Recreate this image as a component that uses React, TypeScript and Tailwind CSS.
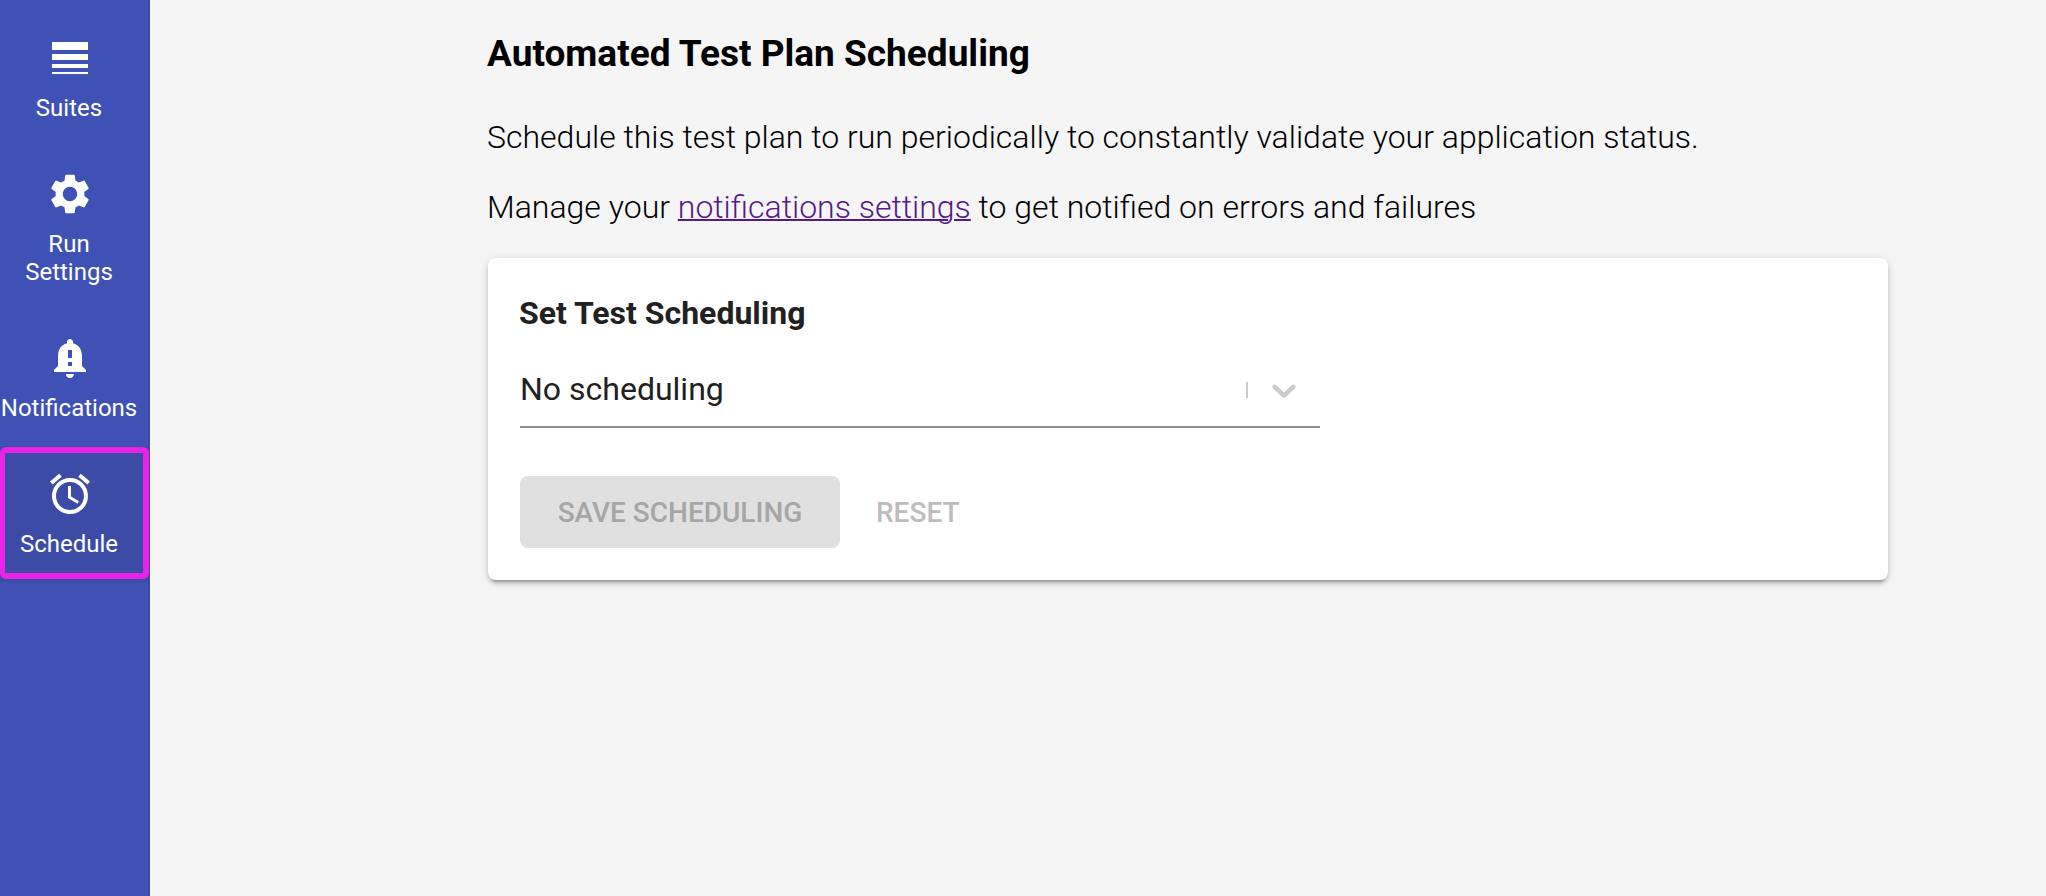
import { useState } from "react";
import type { ComponentType } from "react";
import { MdAlarm, MdLineWeight, MdNotificationImportant, MdSettings } from "react-icons/md";

type NavItem = {
  label: string;
  Icon: ComponentType<{ className?: string }>;
  active?: boolean;
};

const navItems: NavItem[] = [
  { label: "Suites", Icon: MdLineWeight },
  { label: "Run Settings", Icon: MdSettings },
  { label: "Notifications", Icon: MdNotificationImportant },
  { label: "Schedule", Icon: MdAlarm, active: true },
];

function Sidebar() {
  return (
    <nav className="w-[150px] shrink-0 border-r-2 border-[#394aa3] bg-[#3f51b5] pt-[10px]">
      <ul>
        {navItems.map(({ label, Icon, active }) => (
          <li key={label} className={active ? "relative bg-[#3c4ca6]" : "relative"}>
            <a
              href="#"
              aria-current={active ? "page" : undefined}
              className="flex flex-col items-center gap-3 pt-6 pr-2 pb-6 text-center text-2xl leading-7 text-white"
            >
              <Icon className="size-12" />
              <span className="flex w-[108px] justify-center pr-0.5">{label}</span>
            </a>
            {active && (
              <span className="pointer-events-none absolute -right-px bottom-[3px] left-0 top-px rounded-md border-6 border-l-5 border-[#ea22e8]" />
            )}
          </li>
        ))}
      </ul>
    </nav>
  );
}

function ScheduleCard() {
  const [schedule, setSchedule] = useState("none");
  return (
    <form className="mt-8 ml-px rounded-lg bg-white px-8 py-8 text-[#212121] shadow-[0_6px_2px_-4px_rgba(0,0,0,0.2),0_4px_4px_0_rgba(0,0,0,0.14),0_2px_10px_0_rgba(0,0,0,0.12)]">
      <label htmlFor="schedule" className="-ml-px block text-[32px] leading-[46px] font-bold">
        Set Test Scheduling
      </label>
      <div className="relative mt-[18px] w-[800px] max-w-full border-b-2 border-[#919191]">
        <select
          id="schedule"
          value={schedule}
          onChange={(event) => setSchedule(event.target.value)}
          className="block h-[72px] w-full appearance-none bg-transparent pb-0.5 text-[32px] outline-none"
        >
          <option value="none">No scheduling</option>
        </select>
        <div className="pointer-events-none absolute inset-y-0 right-0 flex items-center gap-4 pr-4">
          <span className="h-4 w-0.5 bg-[#cccccc]" />
          <svg viewBox="0 0 20 20" className="size-10 fill-[#cccccc]" aria-hidden="true">
            <path d="M4.516 7.548c0.436-0.446 1.043-0.481 1.576 0l3.908 3.747 3.908-3.747c0.533-0.481 1.141-0.446 1.574 0 0.436 0.445 0.408 1.197 0 1.615-0.406 0.418-4.695 4.502-4.695 4.502-0.217 0.223-0.502 0.335-0.787 0.335s-0.57-0.112-0.789-0.335c0 0-4.287-4.084-4.695-4.502s-0.436-1.17 0-1.615z" />
          </svg>
        </div>
      </div>
      <div className="mt-12 flex gap-5">
        <button type="button" disabled className="h-[72px] w-80 rounded-lg bg-[#e0e0e0] pt-0.5 text-[28px] font-medium text-[#a6a6a6]">
          SAVE SCHEDULING
        </button>
        <button type="button" disabled className="h-[72px] px-4 pt-0.5 text-[28px] font-medium text-[#bdbdbd]">
          RESET
        </button>
      </div>
    </form>
  );
}

export default function App() {
  return (
    <div className="flex min-h-screen bg-[#f5f5f5] font-['Roboto',sans-serif] text-black">
      <Sidebar />
      <main className="min-w-0 flex-1 pt-8 pr-[158px] pl-[337px]">
        <h1 className="text-[37px] leading-11 font-bold">Automated Test Plan Scheduling</h1>
        <p className="mt-[42px] text-[32px] leading-[38px] font-light">
          Schedule this test plan to run periodically to constantly validate your application status.
        </p>
        <p className="mt-8 text-[32px] leading-[38px] font-light">
          Manage your{" "}
          <a href="#" className="text-[#551a8b] underline decoration-2">
            notifications settings
          </a>{" "}
          to get notified on errors and failures
        </p>
        <ScheduleCard />
      </main>
    </div>
  );
}
